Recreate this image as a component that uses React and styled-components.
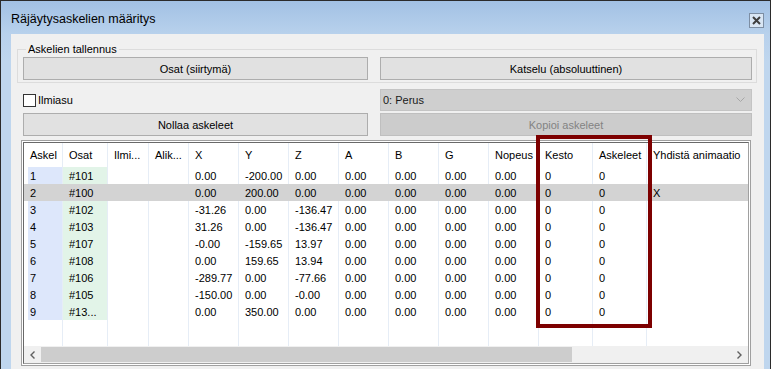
import React from 'react'
import styled, { createGlobalStyle } from 'styled-components'

const GlobalStyle = createGlobalStyle`
  html, body {
    margin: 0;
    padding: 0;
    background: #fff;
    overflow: hidden;
  }
  body {
    font-family: "Liberation Sans", Arial, sans-serif;
    font-size: 11px;
    color: #000;
  }
`

const columns = ['Askel', 'Osat', 'Ilmi...', 'Alik...', 'X', 'Y', 'Z', 'A', 'B', 'G', 'Nopeus', 'Kesto', 'Askeleet', 'Yhdistä animaatio']

const rows = [
    ['1', '#101', '', '', '0.00', '-200.00', '0.00', '0.00', '0.00', '0.00', '0.00', '0', '0', ''],
    ['2', '#100', '', '', '0.00', '200.00', '0.00', '0.00', '0.00', '0.00', '0.00', '0', '0', 'X'],
    ['3', '#102', '', '', '-31.26', '0.00', '-136.47', '0.00', '0.00', '0.00', '0.00', '0', '0', ''],
    ['4', '#103', '', '', '31.26', '0.00', '-136.47', '0.00', '0.00', '0.00', '0.00', '0', '0', ''],
    ['5', '#107', '', '', '-0.00', '-159.65', '13.97', '0.00', '0.00', '0.00', '0.00', '0', '0', ''],
    ['6', '#108', '', '', '0.00', '159.65', '13.94', '0.00', '0.00', '0.00', '0.00', '0', '0', ''],
    ['7', '#106', '', '', '-289.77', '0.00', '-77.66', '0.00', '0.00', '0.00', '0.00', '0', '0', ''],
    ['8', '#105', '', '', '-150.00', '0.00', '-0.00', '0.00', '0.00', '0.00', '0.00', '0', '0', ''],
    ['9', '#13...', '', '', '0.00', '350.00', '0.00', '0.00', '0.00', '0.00', '0.00', '0', '0', ''],
]

const SELECTED = 1

const cellKind = (i) => (i === 0 ? 'askel' : i === 1 ? 'osat' : 'plain')

const App = () => {
    return (
        <Page>
            <GlobalStyle />
            <Window>
                <TitleBar>
                    <Title>Räjäytysaskelien määritys</Title>
                    <CloseButton>
                        <svg width="9" height="9" viewBox="0 0 9 9">
                            <path d="M1 1 L8 8 M8 1 L1 8" stroke="#3f3f3f" strokeWidth="2" />
                        </svg>
                    </CloseButton>
                </TitleBar>
                <Frame>
                    <Client>
                        <GroupBox>
                            <Legend>Askelien tallennus</Legend>
                            <ControlRow>
                                <Button>Osat (siirtymä)</Button>
                                <Button>Katselu (absoluuttinen)</Button>
                            </ControlRow>
                        </GroupBox>
                        <Section>
                            <ControlRow $top={6}>
                                <CheckLabel>
                                    <CheckBox />
                                    Ilmiasu
                                </CheckLabel>
                                <Combo>
                                    <span>0: Perus</span>
                                    <svg width="9" height="6" viewBox="0 0 9 6">
                                        <path d="M0.5 0.5 L4.5 4.5 L8.5 0.5" fill="none" stroke="#a6a6a6" />
                                    </svg>
                                </Combo>
                            </ControlRow>
                            <ControlRow $top={2}>
                                <Button>Nollaa askeleet</Button>
                                <Button disabled>Kopioi askeleet</Button>
                            </ControlRow>
                            <DataGrid>
                                <GridInner>
                                    <HeaderRow>
                                        {columns.map((c, i) => (
                                            <HeaderCell key={c} $first={i === 0}>{c}</HeaderCell>
                                        ))}
                                    </HeaderRow>
                                    {rows.map((r, ri) => (
                                        <Row key={ri} $selected={ri === SELECTED}>
                                            {r.map((v, ci) => (
                                                <Cell key={ci} $kind={cellKind(ci)} $selected={ri === SELECTED}>{v}</Cell>
                                            ))}
                                        </Row>
                                    ))}
                                    <FillerRow>
                                        {columns.map((c, i) => (
                                            <FillerCell key={c} $first={i === 0} />
                                        ))}
                                    </FillerRow>
                                    <ScrollBar>
                                        <ScrollArrow>
                                            <svg width="5" height="8" viewBox="0 0 5 8">
                                                <path d="M4.5 0.5 L1 4 L4.5 7.5" fill="none" stroke="#606060" strokeWidth="1.4" />
                                            </svg>
                                        </ScrollArrow>
                                        <Track>
                                            <Thumb />
                                        </Track>
                                        <ScrollArrow>
                                            <svg width="5" height="8" viewBox="0 0 5 8">
                                                <path d="M0.5 0.5 L4 4 L0.5 7.5" fill="none" stroke="#606060" strokeWidth="1.4" />
                                            </svg>
                                        </ScrollArrow>
                                    </ScrollBar>
                                </GridInner>
                            </DataGrid>
                        </Section>
                    </Client>
                </Frame>
            </Window>
            <Highlight />
        </Page>
    )
}

const Page = styled.div`
    position: relative;
    width: 774px;
    height: 369px;
`
const Window = styled.div`
    width: 771px;
    height: 380px;
    box-sizing: border-box;
    border: 1px solid #2b2b2b;
    border-bottom: none;
    background: linear-gradient(to bottom, #a2c1e4 0px, #b8d1ec 33px, #bfd6ee 60px, #bfd6ee 100%);
    display: flex;
    flex-direction: column;
`
const TitleBar = styled.div`
    height: 33px;
    display: flex;
    align-items: center;
    justify-content: space-between;
    padding: 0 6px 0 10px;
`
const Title = styled.div`
    font-family: "Liberation Sans", Arial, sans-serif;
    font-size: 12.5px;
    color: #000;
    margin-top: 2px;
`
const CloseButton = styled.div`
    width: 15px;
    height: 15px;
    box-sizing: border-box;
    border: 1px solid #7d8ea3;
    background: #d9e6f4;
    display: flex;
    align-items: center;
    justify-content: center;
    margin-top: 6px;
`
const Frame = styled.div`
    flex: 1;
    padding: 0 6px 0 10px;
    display: flex;
`
const Client = styled.div`
    flex: 1;
    background: #f0f0f0;
    padding: 0 7px 0 6px;
`
const GroupBox = styled.fieldset`
    margin: 9px 0 0 0;
    padding: 1px 4px 2px 5px;
    border: 1px solid #dcdcdc;
    min-width: 0;
`
const Legend = styled.legend`
    padding: 0 2px;
    margin-left: 3px;
    line-height: 13px;
    font-size: 11px;
`
const Section = styled.div`
    margin: 0 5px;
`
const ControlRow = styled.div`
    display: grid;
    grid-template-columns: 345px 372px;
    column-gap: 12px;
    margin-top: ${p => p.$top || 0}px;
    padding-left: ${p => (p.$top ? 1 : 0)}px;
    align-items: center;
`
const Button = styled.button`
    height: 23px;
    box-sizing: border-box;
    margin: 0;
    padding: 0;
    font-family: "Liberation Sans", Arial, sans-serif;
    font-size: 11px;
    background: ${p => (p.disabled ? '#cccccc' : '#e1e1e1')};
    border: 1px solid ${p => (p.disabled ? '#bfbfbf' : '#adadad')};
    color: ${p => (p.disabled ? '#838383' : '#000')};
    border-radius: 0;
    outline: none;
`
const CheckLabel = styled.label`
    display: flex;
    align-items: center;
    gap: 2px;
`
const CheckBox = styled.span`
    width: 13px;
    height: 13px;
    box-sizing: border-box;
    border: 1px solid #333;
    background: #fff;
`
const Combo = styled.div`
    height: 22px;
    box-sizing: border-box;
    border: 1px solid #c4c4c4;
    background: #cfcfcf;
    display: flex;
    align-items: center;
    justify-content: space-between;
    padding: 0 6px 0 2px;
    color: #1a1a1a;
`
const DataGrid = styled.div`
    margin-top: 4px;
    margin-left: -1px;
    width: 730px;
    box-sizing: border-box;
    border: 1px solid #a0a0a0;
    padding: 1px;
    background: #fff;
`
const GridInner = styled.div`
    border: 1px solid #696969;
    border-right-color: #a0a0a0;
    border-bottom-color: #a0a0a0;
    background: #fff;
    display: flex;
    flex-direction: column;
`
const gridColumns = '34px 45px 41px 40px repeat(7, 50px) 54px 54px 1fr'

const HeaderRow = styled.div`
    display: grid;
    grid-template-columns: ${gridColumns};
    padding-left: 4px;
    height: 24px;
`
const HeaderCell = styled.div`
    display: flex;
    align-items: center;
    padding-left: ${p => (p.$first ? 2 : 6)}px;
    border-left: ${p => (p.$first ? 'none' : '1px solid #e6edf6')};
    white-space: nowrap;
    overflow: hidden;
`
const Row = styled.div`
    display: grid;
    grid-template-columns: ${gridColumns};
    padding-left: 4px;
    height: 17px;
    background: ${p => (p.$selected ? '#d3d3d3' : '#fff')};
`
const Cell = styled.div`
    display: flex;
    align-items: center;
    padding-left: ${p => (p.$kind === 'askel' ? 2 : 6)}px;
    border-left: ${p => (p.$kind === 'askel' ? 'none' : '1px solid #e6edf6')};
    border-left-color: ${p => (p.$selected ? '#d3d3d3' : '#e6edf6')};
    background: ${p => (p.$selected ? '#d3d3d3' : p.$kind === 'askel' ? '#dde7fb' : p.$kind === 'osat' ? '#e2f4e8' : 'transparent')};
    white-space: nowrap;
    overflow: hidden;
`
const FillerRow = styled.div`
    display: grid;
    grid-template-columns: ${gridColumns};
    padding-left: 4px;
    height: 26px;
`
const FillerCell = styled.div`
    border-left: ${p => (p.$first ? 'none' : '1px solid #e6edf6')};
`
const ScrollBar = styled.div`
    height: 17px;
    display: flex;
    background: #f0f0f0;
`
const ScrollArrow = styled.div`
    width: 17px;
    display: flex;
    align-items: center;
    justify-content: center;
`
const Track = styled.div`
    flex: 1;
    display: flex;
    align-items: stretch;
    padding: 1px 0;
`
const Thumb = styled.div`
    width: 531px;
    background: #cdcdcd;
`
const Highlight = styled.div`
    position: absolute;
    left: 536px;
    top: 135px;
    width: 116px;
    height: 193px;
    box-sizing: border-box;
    border: 4px solid #7d0000;
    pointer-events: none;
`

export default App
